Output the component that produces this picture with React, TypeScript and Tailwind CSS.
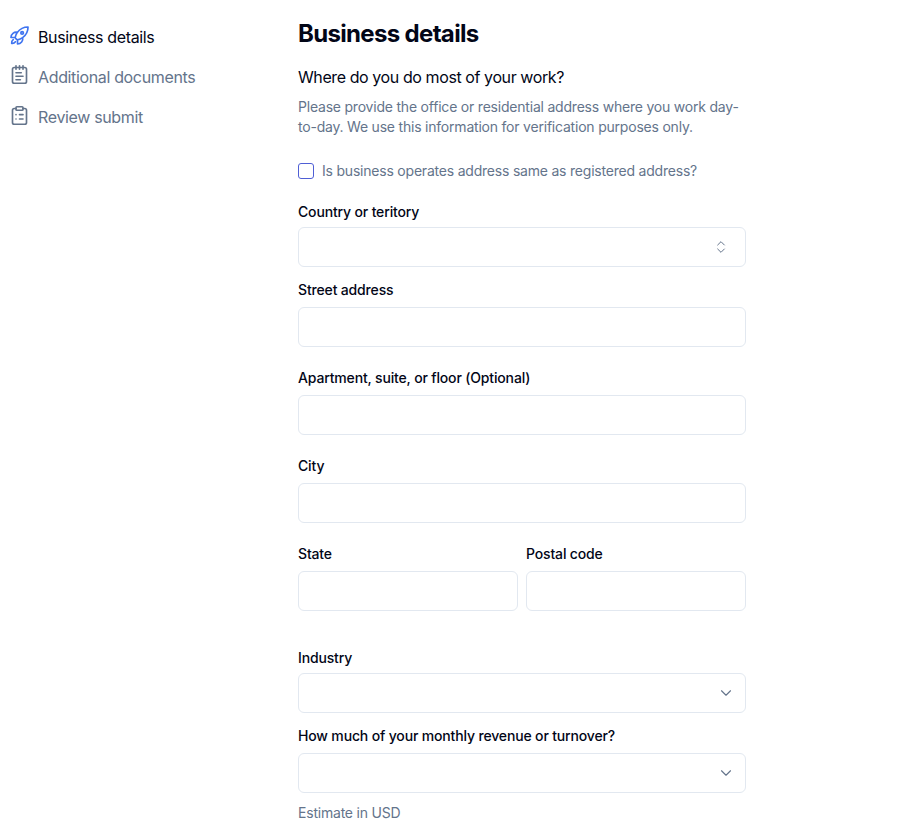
import React from "react";
import { NotepadText, ClipboardList, ChevronsUpDown, ChevronDown } from "lucide-react";
import { HiOutlineRocketLaunch } from "react-icons/hi2";

function Label({ children, className = "" }: { children: React.ReactNode; className?: string }) {
  return <label className={`block h-5 text-sm leading-5 font-medium tracking-[-0.155px] text-[#020617] ${className}`}>{children}</label>;
}

function Input({ className = "" }: { className?: string }) {
  return <input className={`block h-10 w-full rounded-md border border-[#e2e8f0] bg-white ${className}`} />;
}

function Select({ children, className = "" }: { children: React.ReactNode; className?: string }) {
  return (
    <div className={`flex h-10 w-full items-center justify-end rounded-md border border-[#e2e8f0] bg-white ${className}`}>
      {children}
    </div>
  );
}

export default function App() {
  return (
    <div className="flex h-[832px] w-[903px] overflow-hidden bg-white font-['Inter',sans-serif]">
      <nav className="w-[298px] shrink-0 pl-[9px] pt-[17px]">
        <div className="flex h-10 items-center gap-[8px] text-base tracking-[-0.35px] text-[#020617]">
          <HiOutlineRocketLaunch className="mb-[4px] h-[21px] w-[21px] text-[#3f74f0]" strokeWidth={1.9} />
          Business details
        </div>
        <div className="flex h-10 items-center gap-[8px] text-base tracking-[-0.35px] text-[#64748b]">
          <NotepadText className="mb-[5px] h-[21px] w-[21px]" strokeWidth={1.9} />
          Additional documents
        </div>
        <div className="flex h-10 items-center gap-[8px] text-base tracking-[-0.35px] text-[#64748b]">
          <ClipboardList className="mb-[4px] h-[21px] w-[21px]" strokeWidth={1.9} />
          Review submit
        </div>
      </nav>
      <main className="w-[448px] shrink-0 pt-[18px]">
        <h1 className="h-8 text-2xl leading-8 font-bold tracking-[-0.67px] text-[#020617]">Business details</h1>
        <p className="mt-[13px] h-7 text-base leading-7 tracking-[-0.41px] text-[#020617]">Where do you do most of your work?</p>
        <p className="mt-[6px] text-sm leading-5 tracking-[-0.21px] text-[#64748b]">
          Please provide the office or residential address where you work day-to-day. We use this information for verification purposes only.
        </p>
        <div className="mt-[24px] flex h-5 items-center gap-2">
          <span className="h-4 w-4 rounded-[3px] border border-[#4f5fd5] bg-white" />
          <span className="text-sm leading-5 tracking-[-0.21px] text-[#64748b]">Is business operates address same as registered address?</span>
        </div>

        <Label className="mt-[21px]">Country or teritory</Label>
        <Select className="mt-[5px] pr-[16px]">
          <ChevronsUpDown className="h-4 w-4 text-[#64748b]" strokeWidth={1.5} />
        </Select>

        <Label className="mt-[13px]">Street address</Label>
        <Input className="mt-[7px]" />

        <Label className="mt-[21px]">Apartment, suite, or floor (Optional)</Label>
        <Input className="mt-[7px]" />

        <Label className="mt-[21px]">City</Label>
        <Input className="mt-[7px]" />

        <div className="mt-[21px] grid grid-cols-2 gap-2">
          <div>
            <Label>State</Label>
            <Input className="mt-[7px]" />
          </div>
          <div>
            <Label>Postal code</Label>
            <Input className="mt-[7px]" />
          </div>
        </div>

        <Label className="mt-[37px]">Industry</Label>
        <Select className="mt-[5px] pr-[10px]">
          <ChevronDown className="h-[18px] w-[18px] text-[#64748b]" strokeWidth={1.5} />
        </Select>

        <Label className="mt-[13px]">How much of your monthly revenue or turnover?</Label>
        <Select className="mt-[7px] pr-[10px]">
          <ChevronDown className="h-[18px] w-[18px] text-[#64748b]" strokeWidth={1.5} />
        </Select>

        <p className="mt-[10px] text-sm leading-5 tracking-[-0.21px] text-[#64748b]">Estimate in USD</p>
      </main>
    </div>
  );
}
